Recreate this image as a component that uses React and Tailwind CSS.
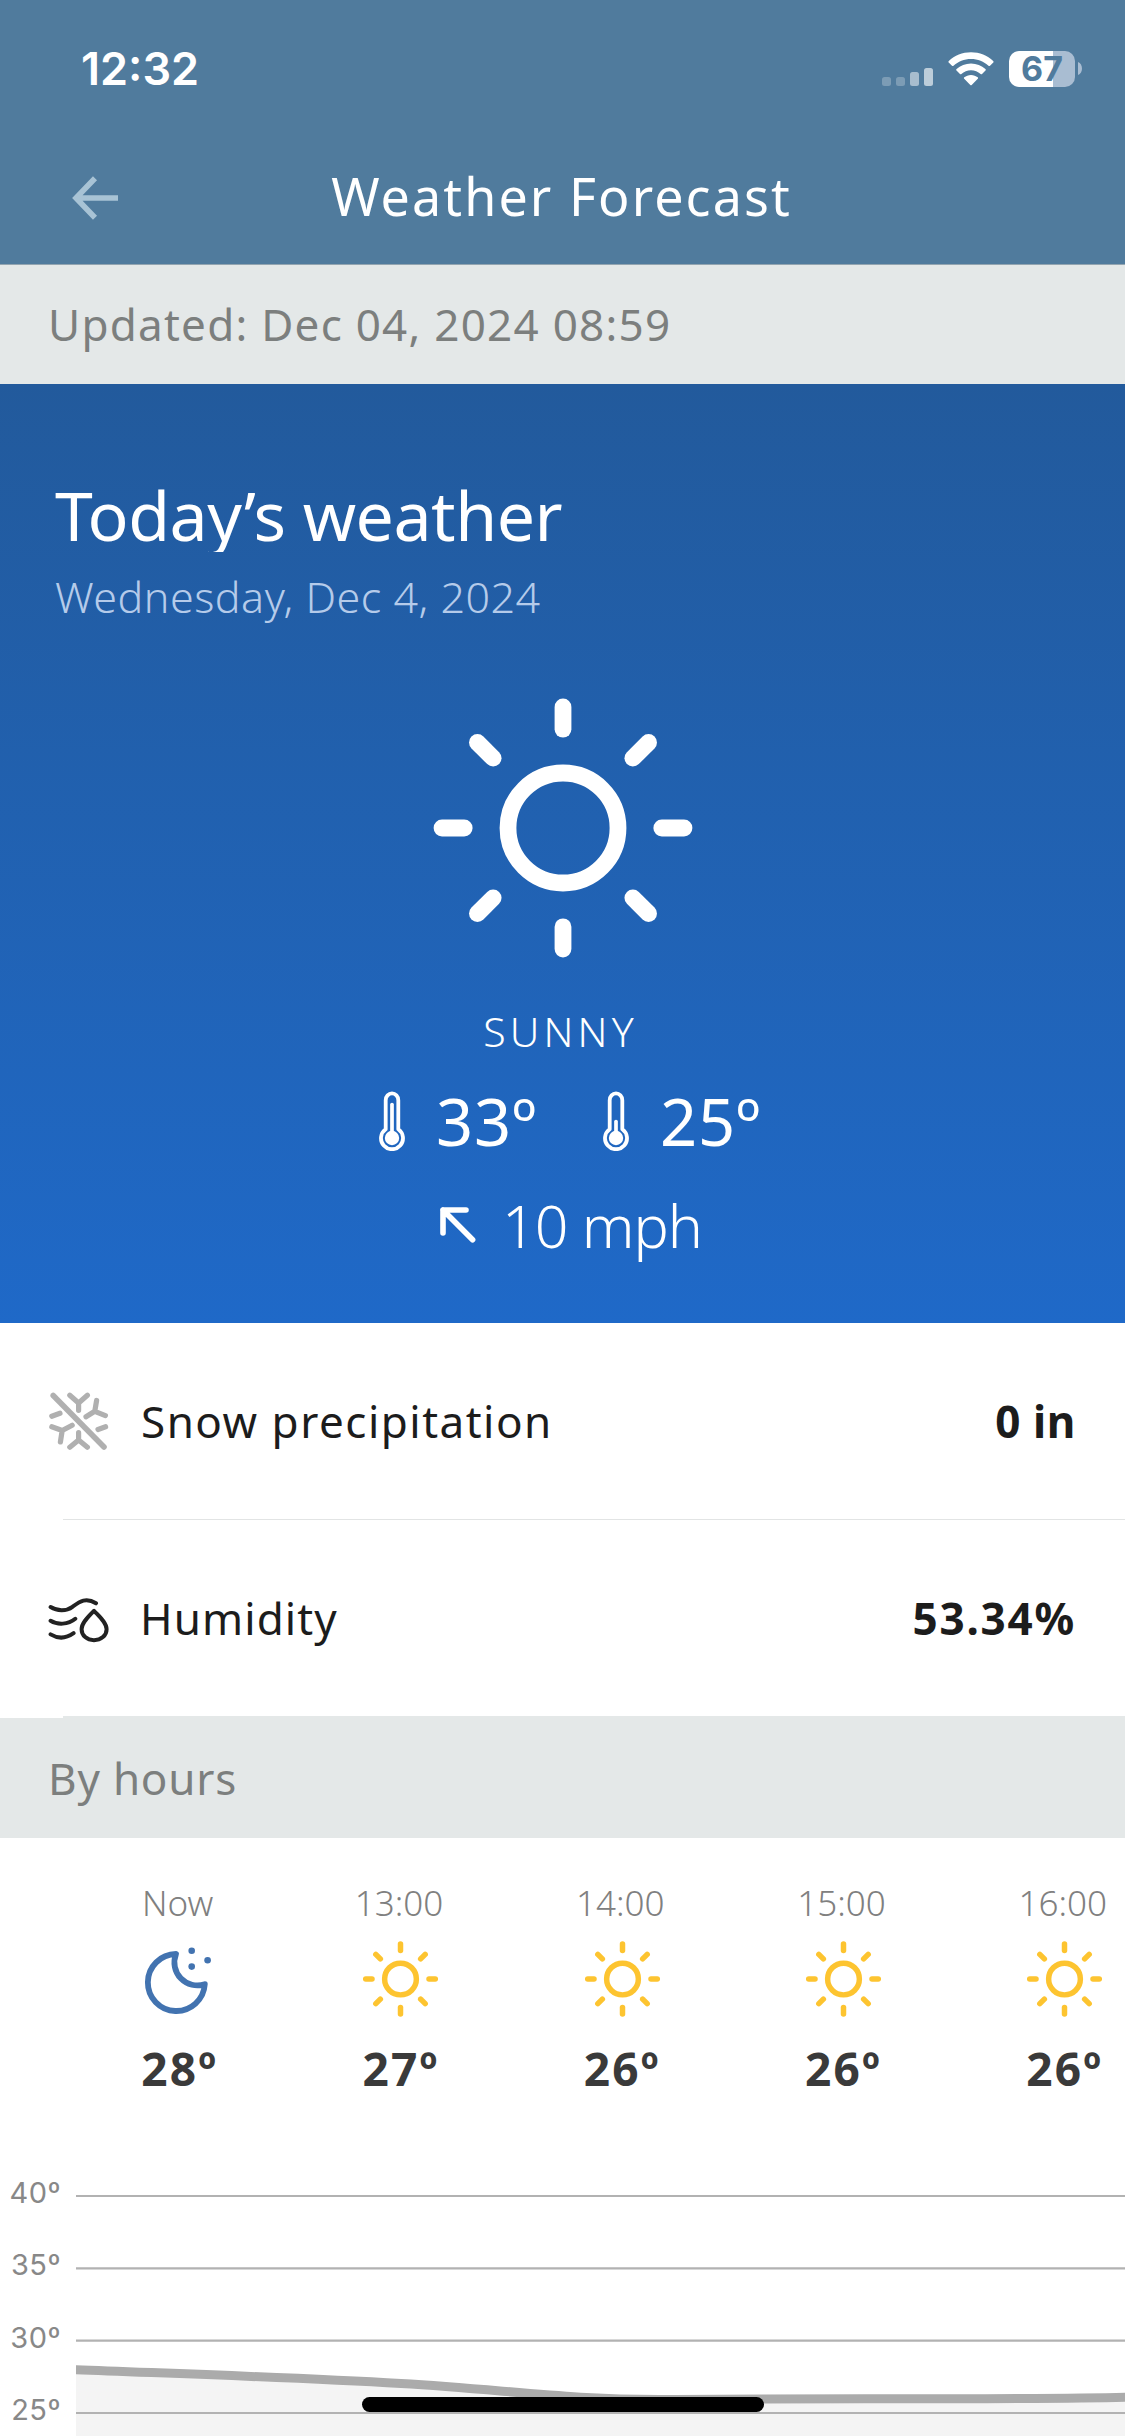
const hours = [
  { time: "Now", icon: "moon", temp: "28º" },
  { time: "13:00", icon: "sun", temp: "27º" },
  { time: "14:00", icon: "sun", temp: "26º" },
  { time: "15:00", icon: "sun", temp: "26º" },
  { time: "16:00", icon: "sun", temp: "26º" },
];

const axisLabels = ["40º", "35º", "30º", "25º"];

function SunIcon({ className, stroke = 16.8 }) {
  return (
    <svg viewBox="-130 -130 260 260" className={className} fill="none" stroke="currentColor" strokeWidth={stroke} strokeLinecap="round">
      <circle r="55" />
      {[0, 45, 90, 135, 180, 225, 270, 315].map((deg) => (
        <line key={deg} x1="98.8" y1="0" x2="121" y2="0" transform={`rotate(${deg})`} />
      ))}
    </svg>
  );
}

function MoonIcon({ className }) {
  return (
    <svg viewBox="0 0 76 76" className={className} fill="none">
      <path
        d="M34 13A28.5 28.5 0 1 0 62.8 43.2A23 23 0 0 1 34 13Z"
        stroke="currentColor"
        strokeWidth="5.8"
        strokeLinejoin="round"
      />
      <circle cx="49.7" cy="9.7" r="3.3" fill="currentColor" />
      <circle cx="65.6" cy="19.3" r="3.3" fill="currentColor" />
      <circle cx="49.7" cy="25.6" r="3.3" fill="currentColor" />
    </svg>
  );
}

function ThermometerIcon({ level }) {
  return (
    <svg viewBox="0 0 26 60" className="w-[26px] h-[60px]" fill="none" stroke="white">
      <path
        d="M6.7 38.2V9.2A6.3 6.8 0 0 1 19.3 9.2V38.2A11 11 0 1 1 6.7 38.2Z"
        strokeWidth="3.8"
        strokeLinejoin="round"
      />
      <line x1="13" y1={level} x2="13" y2="46" strokeWidth="3.7" strokeLinecap="round" />
      <circle cx="13" cy="47" r="7.2" fill="white" stroke="none" />
    </svg>
  );
}

function SnowOffIcon() {
  return (
    <svg viewBox="0 0 62 62" className="w-[62px] h-[62px]" fill="none" stroke="#b0b0b0" strokeWidth="5.2" strokeLinecap="round" strokeLinejoin="round">
      <path d="M5.2 5.5L56 57" strokeWidth="5.6" />
      <path d="M21.8 5.3L30.6 13L39.4 5.3M30.6 13V20.3" />
      <path d="M48.6 10.5L46.8 21.3L57.4 25.6M46.8 21.3L38 26.8" />
      <path d="M3.8 26.2L12 23.3M50 39.5L57.6 36.8" />
      <path d="M3.8 36.8L14.2 40.5L24.2 35.2M14.2 40.5L12.4 52" />
      <path d="M21.8 57.2L30.6 50L39.4 57.2M30.6 50V42.7" />
    </svg>
  );
}

function HumidityIcon() {
  return (
    <svg viewBox="0 0 62 62" className="w-[62px] h-[62px]" fill="none" stroke="#222222" strokeWidth="4" strokeLinecap="round" strokeLinejoin="round">
      <path d="M2.6 20C9 24 18 24.6 24.5 19.8C32 14.4 38 10 48 16.3" />
      <path d="M2.6 33.8C9.5 38 20 37.8 27.3 31.8" />
      <path d="M2.6 47.4C9.5 51.6 18 51.6 25.6 46.2" />
      <path d="M46 23.8C41.2 29 33.6 35.5 33.6 42.2C33.6 48.6 39 53.2 46 53.2C53 53.2 58.6 48.6 58.6 42.2C58.6 35.5 50.8 29 46 23.8Z" />
    </svg>
  );
}

function StatusBar() {
  return (
    <div className="h-[137px] pl-[81px] pr-[43px] flex items-center justify-between">
      <span className="font-['Inter',sans-serif] text-[45px] leading-[60px] font-semibold">12:32</span>
      <div className="flex items-center">
        <svg viewBox="0 0 51 34" className="w-[51px] h-[34px] mr-[15px]" fill="white">
          <rect x="0" y="25" width="9" height="9" rx="2.5" opacity="0.25" />
          <rect x="14" y="25" width="9" height="9" rx="2.5" opacity="0.25" />
          <rect x="28" y="20" width="9" height="14" rx="2.5" opacity="0.5" />
          <rect x="42" y="16" width="9" height="18" rx="2.5" opacity="0.62" />
        </svg>
        <svg viewBox="0 0 46 34" className="w-[46px] h-[34px] mr-[15px]" fill="white">
          <path d="M23 0.2C31.6 0.2 39.4 3.5 45.2 8.9C45.7 9.4 45.7 10 45.3 10.4L42 13.7C41.6 14.1 41 14.1 40.5 13.7C35.9 9.5 29.8 7 23 7S10.1 9.5 5.5 13.7C5 14.1 4.4 14.1 4 13.7L0.7 10.4C0.3 10 0.3 9.4 0.8 8.9C6.6 3.5 14.4 0.2 23 0.2Z" />
          <path d="M23 11.6C28.5 11.6 33.6 13.7 37.4 17.1C37.9 17.5 37.9 18.2 37.5 18.6L34 22C33.6 22.4 33 22.4 32.6 22C30 19.7 26.7 18.3 23 18.3S16 19.7 13.4 22C13 22.4 12.4 22.4 12 22L8.5 18.6C8.1 18.2 8.1 17.5 8.6 17.1C12.4 13.7 17.5 11.6 23 11.6Z" />
          <path d="M23 22.9C25.6 22.9 27.9 23.8 29.7 25.3C30.2 25.7 30.2 26.4 29.8 26.8L23.7 33C23.3 33.4 22.7 33.4 22.3 33L16.2 26.8C15.8 26.4 15.8 25.7 16.3 25.3C18.1 23.8 20.4 22.9 23 22.9Z" />
        </svg>
        <div className="w-[66px] h-9 rounded-[10px] bg-[linear-gradient(to_right,#ffffff_0_44px,#a9bdd2_44px)] flex items-center justify-center">
          <span className="font-['Inter',sans-serif] text-[34px] leading-9 font-bold text-[#507b9d]">67</span>
        </div>
        <svg viewBox="0 0 4 13" className="w-1 h-[13px] ml-[3px]" fill="#a9bdd2">
          <path d="M0 0C5.3 2 5.3 11 0 13Z" />
        </svg>
      </div>
    </div>
  );
}

function NavBar() {
  return (
    <div className="h-[118px] pl-[72px] pr-[74px] grid grid-cols-[1fr_auto_1fr] items-center">
      <svg viewBox="0 0 46 44" className="w-[46px] h-11 mt-1" fill="none" stroke="#a8c3d5" strokeWidth="5.6">
        <path d="M46 22H5M23 2.2L4 22L23 41.8" />
      </svg>
      <h1 className="text-[52px] leading-[70px] tracking-[2.1px]">Weather Forecast</h1>
    </div>
  );
}

function SectionBar({ children, className }) {
  return (
    <div className={`${className} bg-[#e4e8e8] pl-12 pb-px flex items-center text-[44px] leading-[60px] text-[#7c7f7e]`}>
      {children}
    </div>
  );
}

function TodayCard() {
  return (
    <section className="h-[939px] pt-[93px] bg-linear-to-b from-[#225a9c] to-[#1f69c8] text-white">
      <h2 className="h-[75px] pl-[55px] text-[68px] leading-[75px] tracking-[-0.5px] overflow-hidden">Today’s weather</h2>
      <p className="mt-[15px] pl-[55px] text-[43px] leading-[60px] font-light tracking-[0.5px] text-[#b5cbea]">
        Wednesday, Dec 4, 2024
      </p>
      <SunIcon className="w-[260px] h-[260px] mx-auto mt-[71px]" />
      <p className="mt-12 pr-1 text-center text-[41px] leading-[50px] font-light tracking-[4.2px]">SUNNY</p>

      <div className="mt-[25px] pl-[379px] flex h-20 text-[65px] leading-[80px] tracking-[0.8px]">
        <div className="w-[224px] flex items-center gap-[31px]">
          <ThermometerIcon level={13.5} />
          <span>33º</span>
        </div>
        <div className="w-[224px] flex items-center gap-[31px]">
          <ThermometerIcon level={30.5} />
          <span>25º</span>
        </div>
      </div>

      <div className="mt-[29px] pl-[440px] h-[70px] flex items-center gap-[26px]">
        <svg viewBox="0 0 36 36" className="w-9 h-9" fill="none" stroke="white" strokeWidth="5.6" strokeLinecap="round" strokeLinejoin="round">
          <path d="M26 3H3V26M3 3L32.6 32.8" />
        </svg>
        <span className="text-[59px] leading-[70px] font-light tracking-[-1px]">10 mph</span>
      </div>
    </section>
  );
}

function DetailRow({ icon, label, value }) {
  return (
    <div className="h-[196px] pl-12 pr-[49px] flex items-center text-[44px] leading-[60px] text-[#1c1c1c]">
      {icon}
      {label}
      {value}
    </div>
  );
}

function HourlyChart() {
  return (
    <div className="h-[340px] flex">
      <div className="w-[76px] pt-[61px] pr-[15px] shrink-0 font-['Inter',sans-serif] text-[29px] text-[#888888] text-right tracking-[0.5px]">
        {axisLabels.map((label) => (
          <div key={label} className="h-[72.3px] leading-[72.3px]">{label}</div>
        ))}
      </div>
      <svg viewBox="0 0 1049 340" className="w-[1049px] h-[340px]" fill="none">
        <path d="M0 273.7C110 278 220 281.5 325 287.5C430 293.5 490 304 590 303.5C720 302 960 304 1049 301V340H0Z" fill="#f4f4f4" />
        {[100, 172.3, 244.6, 317].map((y) => (
          <line key={y} x1="0" y1={y} x2="1049" y2={y} stroke="#b2b2b2" strokeWidth="2.2" />
        ))}
        <path d="M-5 273.5L0 273.7C110 278 220 281.5 325 287.5C430 293.5 490 304 590 303.5C720 302 960 304 1054 301" stroke="#ababab" strokeWidth="9" />
      </svg>
    </div>
  );
}

export default function App() {
  return (
    <div className="relative w-[1125px] h-[2436px] overflow-hidden bg-white font-['Noto_Sans','Open_Sans',sans-serif]">
      <header className="h-[265px] bg-[#507b9d] border-b border-[#93a5b1] text-white">
        <StatusBar />
        <NavBar />
      </header>

      <SectionBar className="h-[119px] tracking-[1.25px]">Updated: Dec 04, 2024 08:59</SectionBar>
      <TodayCard />

      <DetailRow
        icon={<SnowOffIcon />}
        label={<span className="ml-[31px] grow tracking-[1.5px]">Snow precipitation</span>}
        value={<span className="font-bold tracking-[0.6px]">0 in</span>}
      />
      <div className="h-px ml-[63px] bg-[#e2e4e4]" />
      <DetailRow
        icon={<HumidityIcon />}
        label={<span className="ml-[30px] grow tracking-[1.1px]">Humidity</span>}
        value={<span className="font-bold tracking-[1.8px]">53.34%</span>}
      />
      <div className="h-0.5 ml-[63px] bg-[#e4e8e8]" />

      <SectionBar className="h-[120px] tracking-[0.8px]">By hours</SectionBar>

      <div className="flex pl-[69px] pt-[43px]">
        {hours.map((h) => (
          <div key={h.time} className="w-[221.3px] shrink-0 flex flex-col items-center">
            <span className="pr-1 text-[35px] leading-[44px] font-light text-[#808080]">{h.time}</span>
            {h.icon === "moon" ? (
              <MoonIcon className="w-[76px] h-[76px] mt-4 text-[#4273b0]" />
            ) : (
              <SunIcon stroke={19} className="w-[75px] h-[76px] mt-4 text-[#fdc430]" />
            )}
            <span className="mt-[23px] text-[46px] leading-[56px] font-bold tracking-[2.2px] text-[#3a3a3a]">{h.temp}</span>
          </div>
        ))}
      </div>

      <HourlyChart />

      {/* home indicator */}
      <div className="absolute left-[362px] bottom-6 w-[402px] h-[15px] rounded-full bg-black" />
    </div>
  );
}
